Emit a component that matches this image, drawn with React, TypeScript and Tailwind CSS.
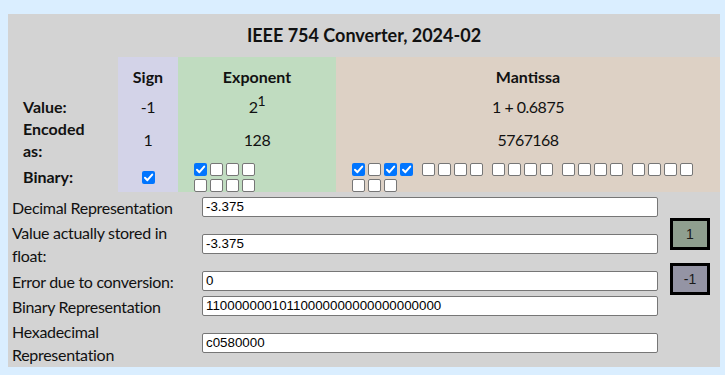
import React from "react";

const FONT = { fontFamily: "Lato, 'Noto Sans', sans-serif" };

function Box({ checked }: { checked: boolean }) {
  if (checked) {
    return (
      <div className="w-[13px] h-[13px] rounded-[2px] bg-[#0075ff] flex items-center justify-center shrink-0">
        <svg width="13" height="13" viewBox="0 0 13 13">
          <path d="M3 6.8 L5.4 9.2 L10.2 3.6" fill="none" stroke="white" strokeWidth="2" strokeLinecap="round" strokeLinejoin="round" />
        </svg>
      </div>
    );
  }
  return <div className="w-[13px] h-[13px] rounded-[2px] bg-white border border-[#767676] shrink-0" />;
}

function Group({ bits }: { bits: boolean[] }) {
  return (
    <div className="flex gap-[3px]">
      {bits.map((b, i) => (
        <Box key={i} checked={b} />
      ))}
    </div>
  );
}

const mant = "10110000000000000000000".split("").map((c) => c === "1");
const expo = "10000000".split("").map((c) => c === "1");

function Row({ label, value, twoLine }: { label: React.ReactNode; value: string; twoLine?: boolean }) {
  return (
    <div className={`flex items-center ${twoLine ? "h-[46px]" : "h-[22px]"}`}>
      <div className="w-[194px] pl-[4px] text-[16px] leading-[23px] tracking-[-0.3px] text-[#111] whitespace-nowrap" style={FONT}>
        {label}
      </div>
      <div
        className="w-[456px] h-[20px] bg-white border border-[#767676] rounded-[2px] px-[3px] flex items-center text-[13.333px] text-black"
        style={{ fontFamily: "'Liberation Sans', Arial, sans-serif" }}
      >
        {value}
      </div>
    </div>
  );
}

export default function App() {
  const sign = "bg-[#d3d3e8]";
  const exp = "bg-[#c0dcc0]";
  const man = "bg-[#ddd1c5]";
  return (
    <div className="min-h-screen w-full bg-[#daeeff] pt-[14px] pl-[8px]" style={FONT}>
      <div className="w-[712px] h-[353px] bg-[#d3d3d3] text-[#111]">
        <div className="h-[43px] flex items-center justify-center font-bold text-[18px]">IEEE 754 Converter, 2024-02</div>
        <div className="grid grid-cols-[110px_60px_158px_384px] grid-rows-[39px_22px_44px_30px] text-[16px] leading-[22px]">
          <div />
          <div className={`${sign} flex items-center justify-center font-bold`}>Sign</div>
          <div className={`${exp} flex items-center justify-center font-bold`}>Exponent</div>
          <div className={`${man} flex items-center justify-center font-bold`}>Mantissa</div>

          <div className="flex items-center pl-[15px] font-bold">Value:</div>
          <div className={`${sign} flex items-center justify-center tracking-[-0.4px]`}>-1</div>
          <div className={`${exp} flex items-center justify-center tracking-[-0.4px]`}>
            <span>
              2<span className="relative top-[-7px] text-[14px]">1</span>
            </span>
          </div>
          <div className={`${man} flex items-center justify-center tracking-[-0.5px]`}>1 + 0.6875</div>

          <div className="flex items-center pl-[15px] font-bold">
            Encoded
            <br />
            as:
          </div>
          <div className={`${sign} flex items-center justify-center tracking-[-0.4px]`}>1</div>
          <div className={`${exp} flex items-center justify-center tracking-[-0.4px]`}>128</div>
          <div className={`${man} flex items-center justify-center tracking-[-0.6px]`}>5767168</div>

          <div className="flex items-center pl-[15px] font-bold">Binary:</div>
          <div className={`${sign} flex items-center justify-center`}>
            <Box checked={true} />
          </div>
          <div className={`${exp} pl-[16px] pt-[1px] flex flex-col gap-[3px]`}>
            <Group bits={expo.slice(0, 4)} />
            <Group bits={expo.slice(4, 8)} />
          </div>
          <div className={`${man} pl-[16px] pt-[1px] flex flex-col gap-[3px]`}>
            <div className="flex gap-[9px]">
              <Group bits={mant.slice(0, 4)} />
              <Group bits={mant.slice(4, 8)} />
              <Group bits={mant.slice(8, 12)} />
              <Group bits={mant.slice(12, 16)} />
              <Group bits={mant.slice(16, 20)} />
            </div>
            <Group bits={mant.slice(20, 23)} />
          </div>
        </div>

        <div className="flex mt-[4px]">
          <div className="flex flex-col gap-[3px]">
            <Row label="Decimal Representation" value="-3.375" />
            <Row
              label={
                <>
                  Value actually stored in
                  <br />
                  float:
                </>
              }
              value="-3.375"
              twoLine
            />
            <Row label="Error due to conversion:" value="0" />
            <Row label="Binary Representation" value="11000000010110000000000000000000" />
            <Row
              label={
                <>
                  Hexadecimal
                  <br />
                  Representation
                </>
              }
              value="c0580000"
              twoLine
            />
          </div>
          <div className="ml-[12px] pt-[22px] flex flex-col gap-[13px]" style={{ fontFamily: "'Liberation Sans', Arial, sans-serif" }}>
            <div className="w-[40px] h-[32px] border-[3px] border-black bg-[#8f9f8f] flex items-center justify-center text-[14px] text-[#1a1a1a]">
              1
            </div>
            <div className="w-[40px] h-[32px] border-[3px] border-black bg-[#9494a4] flex items-center justify-center text-[14px] text-[#1a1a1a]">
              -1
            </div>
          </div>
        </div>
      </div>
    </div>
  );
}
